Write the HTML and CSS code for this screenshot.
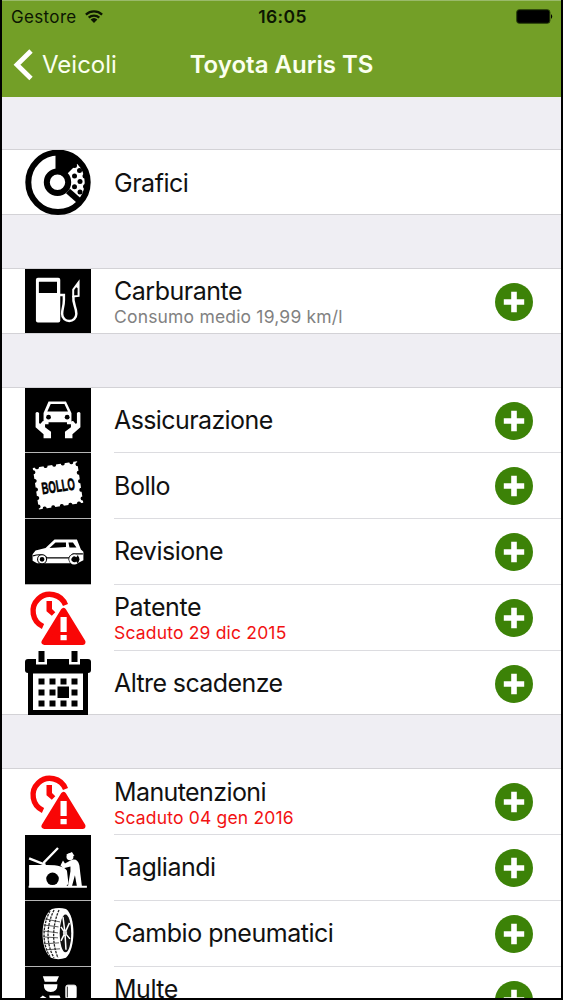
FILE: index.html
```html
<!DOCTYPE html>
<html lang="it">
<head>
<meta charset="utf-8">
<title>Toyota Auris TS</title>
<link rel="stylesheet" href="styles.css">
</head>
<body>
<svg class="defs" width="0" height="0">
  <defs>
    <symbol id="plus" viewBox="0 0 38 38">
      <circle cx="19" cy="19" r="19" fill="#3c8207"/>
      <path d="M16.200 8.800h5.600v7.400H29.200v5.600h-7.400V29.200h-5.600v-7.400H8.800v-5.600h7.400z" fill="#fff"/>
    </symbol>
    <symbol id="overdue" viewBox="0 0 66 65">
      <path d="M18 41.500A16.800 16.800 0 1 1 40.500 20" fill="none" stroke="#f90606" stroke-width="5.400"/>
      <path d="M21.500 16h5.500v8l3.300 3.300-3.500 3.500-5.300-4.500z" fill="#f90606"/>
      <path d="M38.500 26.500L20.200 56.500H57.500z" fill="#fff" stroke="#fff" stroke-width="9" stroke-linejoin="round"/>
      <path d="M38.500 26L19.500 57H57.500z" fill="#f90606" stroke="#f90606" stroke-width="6" stroke-linejoin="round"/>
      <path d="M35.500 32h6.200v15h-6.200zM35.500 50h6.200v5.300h-6.200z" fill="#fff"/>
    </symbol>
  </defs>
</svg>
<div class="phone">
  <header class="header">
    <div class="status">
      <div class="carrier"><span class="carrier-name">Gestore</span>
        <svg class="wifi" viewBox="0 0 18 13"><path d="M.9 4.600A12 12 0 0 1 17.100 4.600M3.700 7.700A8 8 0 0 1 14.300 7.700" fill="none" stroke="#0c1602" stroke-width="2.300"/><path d="M5.600 9.500a5 5 0 0 1 6.800 0L9 13z" fill="#0c1602"/></svg>
      </div>
      <div class="time">16:05</div>
      <svg class="battery" viewBox="0 0 38 16"><rect x=".7" y=".7" width="33.200" height="13.600" rx="2.500" fill="#000" stroke="#29400b" stroke-width="1"/><path d="M35 5q2.500 2.500 0 5z" fill="#000"/></svg>
    </div>
    <nav class="nav">
      <div class="back"><svg class="chevron" viewBox="0 0 20 32"><path d="M18 2L4 15.800 18 29.500" fill="none" stroke="#fff" stroke-width="4.800"/></svg><span class="back-label">Veicoli</span></div>
      <h1 class="title">Toyota Auris TS</h1>
    </nav>
  </header>

  <main class="list">
    <section class="group">
      <div class="row">
        <svg class="icon" viewBox="0 0 66 65">
          <circle cx="33" cy="32.300" r="29.700" fill="#fff" stroke="#000" stroke-width="6"/>
          <path d="M30.500 32V2Q46 0 56 10L32 34z" fill="#000"/>
          <path d="M43 41L55.500 52" stroke="#000" stroke-width="6"/>
          <g fill="#000"><circle cx="49.500" cy="26" r="2.500"/><circle cx="55" cy="31.500" r="2.500"/><circle cx="49.500" cy="36.800" r="2.500"/><circle cx="55" cy="42" r="2.500"/><circle cx="54.500" cy="20.500" r="2.500"/><circle cx="60" cy="26" r="2.500"/><circle cx="60.500" cy="36.500" r="2.500"/><circle cx="49.500" cy="15.500" r="2.500"/></g>
          <circle cx="32.500" cy="32.300" r="10.700" fill="#fff" stroke="#000" stroke-width="6"/>
        </svg>
        <div class="text"><span class="label">Grafici</span></div>
      </div>
    </section>

    <section class="group">
      <div class="row">
        <svg class="icon dark" viewBox="0 0 66 65">
          <rect x="10.500" y="9" width="24.800" height="45.500" rx="2" fill="#fff"/>
          <path d="M13.500 13h18.500v11.500h-18.500z" fill="#000"/>
          <path d="M35 26.500h4v5c0 7-1.800 9-1.800 14 0 10 14.500 10 14.500 0 0-7-4-10-3-18" fill="none" stroke="#fff" stroke-width="2.500"/>
          <path d="M48.500 28V21L54 13.500V27.500z" fill="none" stroke="#fff" stroke-width="2"/>
          <path d="M50.500 18L54 13V20z" fill="#fff"/>
        </svg>
        <div class="text double"><span class="label">Carburante</span><span class="sub">Consumo medio 19,99 km/l</span></div>
        <svg class="plus"><use href="#plus"/></svg>
      </div>
    </section>

    <section class="group">
      <div class="row">
        <svg class="icon dark" viewBox="0 0 66 65">
          <path d="M18.500 25L23.500 13.500H41L46.500 25V36.500H42V34.500H23.500V36.500H18.500z" fill="#fff"/>
          <path d="M22.300 23.500L25.700 16H39.500L43 23.500z" fill="#000"/>
          <circle cx="23.500" cy="29.300" r="2.400" fill="#000"/><circle cx="42.200" cy="29.300" r="2.400" fill="#000"/>
          <path d="M10.500 25q1.300-1.800 3.500 0v10.500l1.500.5 2-2.500q2-.8 2.500.8v5.200l6 4.500v6.500h-7.500v-4l-8-7zM55.500 25q-1.300-1.800-3.500 0v10.500l-1.500.5-2-2.500q-2-.8-2.500.8v5.200l-6 4.500v6.500h7.500v-4l8-7z" fill="#fff"/>
        </svg>
        <div class="text"><span class="label tight">Assicurazione</span></div>
        <svg class="plus"><use href="#plus"/></svg>
      </div>
      <div class="row">
        <svg class="icon dark" viewBox="0 0 66 65">
          <g transform="rotate(-8.500 33 32.500)">
            <rect x="10.500" y="11.500" width="45" height="42" fill="#fff"/>
            <rect x="10.500" y="11.500" width="45" height="42" fill="none" stroke="#000" stroke-width="4" stroke-linecap="round" stroke-dasharray="0 8.700" stroke-dashoffset="-4.300"/>
            <text class="stamp" x="16.300" y="39" textLength="33.500" lengthAdjust="spacingAndGlyphs">BOLLO</text>
          </g>
        </svg>
        <div class="text"><span class="label">Bollo</span></div>
        <svg class="plus"><use href="#plus"/></svg>
      </div>
      <div class="row">
        <svg class="icon dark" viewBox="0 0 66 65">
          <path d="M7.500 42V35.500l3-4 10-2.500 9-8.500H52L56 30.500l2.500 2.500v8.500l-6 3H12z" fill="#fff"/>
          <path d="M24.500 29l6-5.500h10.500V28zM43.500 23.500h4.500l3.500 5h-7z" fill="#000"/>
          <path d="M8 37q9-3 14 2h22l4-4h10" fill="none" stroke="#000" stroke-width="1.200"/>
          <circle cx="17" cy="40.500" r="5" fill="#000"/><circle cx="17" cy="40.500" r="3.200" fill="none" stroke="#fff" stroke-width="1.600"/>
          <circle cx="49" cy="40.500" r="5.500" fill="#000"/><path d="M52 43.500a4 4 0 1 1 0-6" fill="none" stroke="#fff" stroke-width="2.300"/>
        </svg>
        <div class="text"><span class="label">Revisione</span></div>
        <svg class="plus"><use href="#plus"/></svg>
      </div>
      <div class="row">
        <svg class="icon"><use href="#overdue"/></svg>
        <div class="text double"><span class="label loose">Patente</span><span class="sub late">Scaduto 29 dic 2015</span></div>
        <svg class="plus"><use href="#plus"/></svg>
      </div>
      <div class="row">
        <svg class="icon" viewBox="0 0 66 65">
          <rect x="0" y="8" width="66" height="14" rx="3" fill="#000"/><path d="M3 17h60v47H3z" fill="#000"/>
          <path d="M8 22.500h50V59H8zM11 0h11v13.500H11zM44 0h11v13.500H44z" fill="#fff"/>
          <path d="M13.500 0h6v11h-6zM46.500 0h6v11h-6z" fill="#000"/>
          <path d="M13.500 27.500h6v6h-6zM24.500 27.500h6v6h-6zM35.500 27.500h6v6h-6zM46.500 27.500h6v6h-6zM13.500 38.500h6v6h-6zM24.500 38.500h6v6h-6zM32.500 35.500h11.500v11.500h-11.500zM46.500 38.500h6v6h-6zM13.500 49.500h6v6h-6zM24.500 49.500h6v6h-6zM35.500 49.500h6v6h-6zM46.500 49.500h6v6h-6z" fill="#000"/>
        </svg>
        <div class="text"><span class="label tight">Altre scadenze</span></div>
        <svg class="plus"><use href="#plus"/></svg>
      </div>
    </section>

    <section class="group">
      <div class="row">
        <svg class="icon"><use href="#overdue"/></svg>
        <div class="text double"><span class="label tight">Manutenzioni</span><span class="sub late">Scaduto 04 gen 2016</span></div>
        <svg class="plus"><use href="#plus"/></svg>
      </div>
      <div class="row">
        <svg class="icon dark" viewBox="0 0 66 65">
          <path d="M4 30h18q17 0 20 6l1.500 13-2 2H4zM3.500 51h58.500v2H3.500z" fill="#fff"/>
          <path d="M4 23.500L20.500 30M18.500 28L33 13" stroke="#fff" stroke-width="2.300"/>
          <circle cx="27.500" cy="44" r="6.300" fill="#000"/>
          <circle cx="45" cy="21.800" r="3.500" fill="#fff"/><path d="M41 20l6-3 2.500 4z" fill="#fff"/>
          <path d="M45.500 25.500q7-3 9 5l1 9 1.500 12h-5l-2-11-3 11h-4l2.500-15v-5l-7 2-3-3 2.500-5 2 3z" fill="#fff"/>
        </svg>
        <div class="text"><span class="label">Tagliandi</span></div>
        <svg class="plus"><use href="#plus"/></svg>
      </div>
      <div class="row">
        <svg class="icon dark" viewBox="0 0 66 65">
          <path d="M27 8Q34 6 41 8C51 15 51 48 41 57Q33 60 26 57C14 48 15 15 27 8z" fill="#fff"/>
          <g fill="none" stroke="#222" stroke-width="1.300" stroke-dasharray="2.500 1"><path d="M25 10C17 25 17 43 25 56M29 9C21 25 21 43 29 57M34 9C27 25 27 43 33 57"/></g>
          <path d="M20 18l15 3M18.500 24l15 2M18 30l15 2M18 36l15 1M19 43l15-1M21 49l14-1" stroke="#333" stroke-width=".8"/>
          <ellipse cx="40.500" cy="32.500" rx="5.800" ry="19" fill="#111"/>
          <path d="M40 32L38 16M40 32L44.500 22M40 32L45 38M40 32L41 49M40 32L36 40M40 32L36 26" stroke="#fff" stroke-width="1.500"/><circle cx="40" cy="32" r="2.200" fill="#ddd"/>
        </svg>
        <div class="text"><span class="label">Cambio pneumatici</span></div>
        <svg class="plus"><use href="#plus"/></svg>
      </div>
      <div class="row">
        <svg class="icon dark" viewBox="0 0 66 65">
          <path d="M17.500 9.500H34L31.500 15H19.500zM18.500 17.500h14q0 8-7 8t-7-8zM14 40v-8l3.500-3 6 4v7zM24 29h10.500l2 5v6H26z" fill="#fff"/>
          <rect x="41" y="18.500" width="10.500" height="14" rx="2" fill="#fff" stroke="#fff"/><path d="M42.500 20v11" stroke="#222"/>
        </svg>
        <div class="text raised"><span class="label">Multe</span></div>
        <svg class="plus"><use href="#plus"/></svg>
      </div>
    </section>
  </main>
</div>
</body>
</html>
```

FILE: styles.css
```css
* { box-sizing: border-box; }
body { margin: 0; background: #000; }
.defs { display: block; }
.phone {
  width: 563px;
  height: 1000px;
  border: solid #000;
  border-width: 0 2px 2px;
  overflow: hidden;
  background: #efeef3;
  font-family: Inter, "Liberation Sans", sans-serif;
  color: #111;
  display: flex;
  flex-direction: column;
}
.header { flex: none; height: 97px; background: #739f27; border-top: 1px solid #9aba6a; }
.status {
  display: grid;
  grid-template-columns: 1fr auto 1fr;
  align-items: center;
  height: 31px;
  padding: 0 7px 0 9px;
  color: #0c1602;
  font-size: 17px;
}
.carrier { display: flex; align-items: center; gap: 8px; }
.carrier-name { letter-spacing: 0.35px; }
.wifi { width: 18px; height: 13px; }
.time { font-size: 17.5px; font-weight: 600; letter-spacing: 0.4px; }
.battery { width: 38px; height: 16px; justify-self: end; }
.nav {
  display: grid;
  grid-template-columns: 1fr auto 1fr;
  align-items: center;
  height: 65px;
  padding: 0 11px;
  color: #fbfff0;
}
.back { display: flex; align-items: center; gap: 9px; font-size: 24px; }
.chevron { width: 20px; height: 32px; }
.title { margin: 0; font-size: 24px; font-weight: 600; }
.list { display: flex; flex-direction: column; gap: 53px; padding-top: 52px; }
.group { background: #fff; border: solid #d3d2d6; border-width: 1px 0; flex: none; }
.row {
  display: grid;
  grid-template-columns: 66px 1fr;
  column-gap: 23px;
  height: 65.75px;
  padding-left: 23px;
  position: relative;
}
.row:last-child { height: 63.75px; }
.icon { width: 66px; height: 65px; display: block; }
.dark { height: 100%; background: #000; }
.row:not(:last-child) .dark { border-bottom: 1px solid #b5b5b5; }
.text {
  display: flex;
  flex-direction: column;
  justify-content: center;
  border-bottom: 1px solid #dcdce0;
  white-space: nowrap;
}
.row:last-child .text { border-bottom: 0; }
.double { padding-top: 3px; }
.raised { padding-bottom: 18px; }
.label { font-size: 25px; line-height: 28px; letter-spacing: -0.48px; }
.tight { letter-spacing: -0.6px; }
.loose { letter-spacing: -0.35px; }
.sub { font-size: 17.500px; line-height: 22px; letter-spacing: 0.18px; color: #818181; margin-top: 1px; }
.late { color: #f21212; }
.plus { position: absolute; right: 28px; top: 14px; width: 38px; height: 38px; }
.stamp { font: bold 16.500px "Liberation Sans", sans-serif; fill: #000; stroke: #000; stroke-width: 0.6px; }
```
